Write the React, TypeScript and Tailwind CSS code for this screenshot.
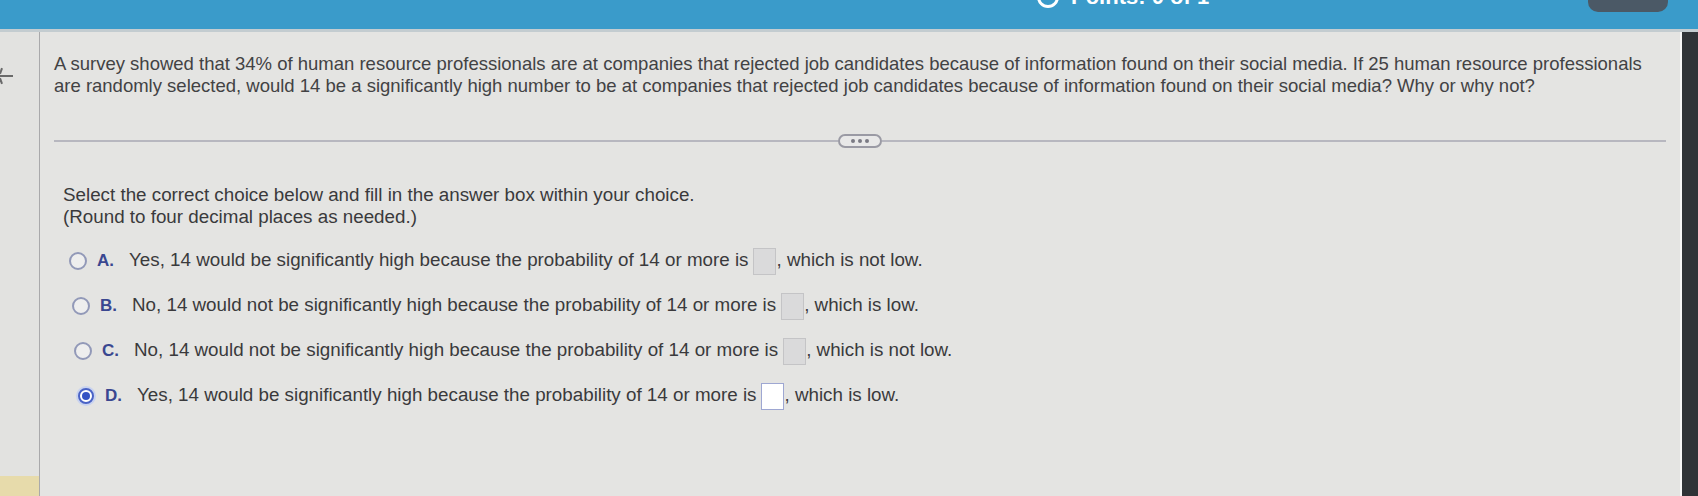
import React from "react";

const Radio = ({ selected }: { selected?: boolean }) =>
  selected ? (
    <span className="flex h-[20px] w-[20px] items-center justify-center rounded-full bg-[#c9d3ef]">
      <span className="flex h-[16px] w-[16px] items-center justify-center rounded-full border-2 border-[#4a63c6] bg-white">
        <span className="h-[8px] w-[8px] rounded-full bg-[#3553c4]" />
      </span>
    </span>
  ) : (
    <span className="flex h-[20px] w-[20px] items-center justify-center">
      <span className="h-[18px] w-[18px] rounded-full border-2 border-[#9299b8] bg-[#eeeeee]" />
    </span>
  );

const Box = ({ active }: { active?: boolean }) =>
  active ? (
    <span className="mx-[5px] inline-block h-[27px] w-[23px] border border-[#9ea7d2] bg-white align-middle" />
  ) : (
    <span className="mx-[5px] inline-block h-[27px] w-[23px] border border-[#c4c4c6] bg-[#dadadb] align-middle" />
  );

const options = [
  { l: "A.", pre: "Yes, 14 would be significantly high because the probability of 14 or more is", post: ", which is not low.", sel: false, ml: "ml-[0px]" },
  { l: "B.", pre: "No, 14 would not be significantly high because the probability of 14 or more is", post: ", which is low.", sel: false, ml: "ml-[3px]" },
  { l: "C.", pre: "No, 14 would not be significantly high because the probability of 14 or more is", post: ", which is not low.", sel: false, ml: "ml-[5px]" },
  { l: "D.", pre: "Yes, 14 would be significantly high because the probability of 14 or more is", post: ", which is low.", sel: true, ml: "ml-[8px]" },
];

export default function App() {
  return (
    <div className="flex h-[496px] w-[1698px] flex-col overflow-hidden bg-[#e4e4e2] font-['Liberation_Sans',Arial,sans-serif]">
      {/* header */}
      <div className="flex h-[32px] shrink-0 items-start overflow-hidden border-b-[3px] border-[#c3ccd0] bg-[#3a9bca]">
        <div className="ml-[1037px] mt-[-14px] flex items-center gap-[12px]">
          <span className="h-[22px] w-[22px] rounded-full border-[3px] border-white" />
          <span className="text-[22px] font-bold leading-none text-white">Points: 0 of 1</span>
        </div>
        <div className="ml-auto mr-[30px] h-[12px] w-[80px] rounded-b-[10px] bg-[#4b5966]" />
      </div>

      <div className="flex flex-1">
        {/* left strip */}
        <div className="flex w-[40px] shrink-0 flex-col border-r border-[#a9a9ab] bg-[#e2e2e0]">
          <div className="mt-[36px] flex flex-col items-start">
            <span className="ml-[0px] h-[6px] w-[2px] rotate-[20deg] bg-[#6a6a6a]" />
            <span className="mt-[1px] h-[2px] w-[13px] bg-[#6a6a6a]" />
            <span className="mt-[1px] h-[6px] w-[2px] -rotate-[20deg] bg-[#6a6a6a]" />
          </div>
          <div className="mt-auto h-[20px] w-full bg-[#e7dbab]" />
        </div>

        {/* main */}
        <div className="flex flex-1 flex-col pl-[14px] pt-[21px] text-[#3a3a3c]">
          <p className="pr-[20px] text-[18.5px] leading-[22px] text-[#424244]">
            A survey showed that 34% of human resource professionals are at companies that rejected job candidates because of information found on their social media. If 25 human resource professionals are randomly selected, would 14 be a significantly high number to be at companies that rejected job candidates because of information found on their social media? Why or why not?
          </p>

          <div className="mt-[37px] flex items-center pr-[14px]">
            <div className="h-[2px] flex-1 bg-[#b7b7bf]" />
            <div className="flex h-[14px] w-[44px] items-center justify-center gap-[3px] rounded-full border-2 border-[#9a9aa4] bg-[#e8e8e8]">
              <span className="h-[4px] w-[4px] rounded-full bg-[#7a7a84]" />
              <span className="h-[4px] w-[4px] rounded-full bg-[#7a7a84]" />
              <span className="h-[4px] w-[4px] rounded-full bg-[#7a7a84]" />
            </div>
            <div className="h-[2px] flex-1 bg-[#b7b7bf]" />
          </div>

          <div className="ml-[9px] mt-[36px] text-[18.8px] leading-[22px]">
            <p>Select the correct choice below and fill in the answer box within your choice.</p>
            <p>(Round to four decimal places as needed.)</p>
          </div>

          <div className="mt-[19px] flex flex-col gap-[18px]">
            {options.map((o) => (
              <div key={o.l} className={`flex h-[27px] items-center ${o.ml}`}>
                <span className="ml-[14px]">
                  <Radio selected={o.sel} />
                </span>
                <span className="ml-[9px] w-[32px] text-[17px] font-bold text-[#3a4790]">{o.l}</span>
                <span className="text-[18.8px]">
                  {o.pre}
                  <Box active={o.sel} />
                  <span className="ml-[-5px]">{o.post}</span>
                </span>
              </div>
            ))}
          </div>
        </div>

        {/* right bezel */}
        <div className="w-[18px] shrink-0 border-l-2 border-[#f6f6f6] bg-[#2f3337]" />
      </div>
    </div>
  );
}
